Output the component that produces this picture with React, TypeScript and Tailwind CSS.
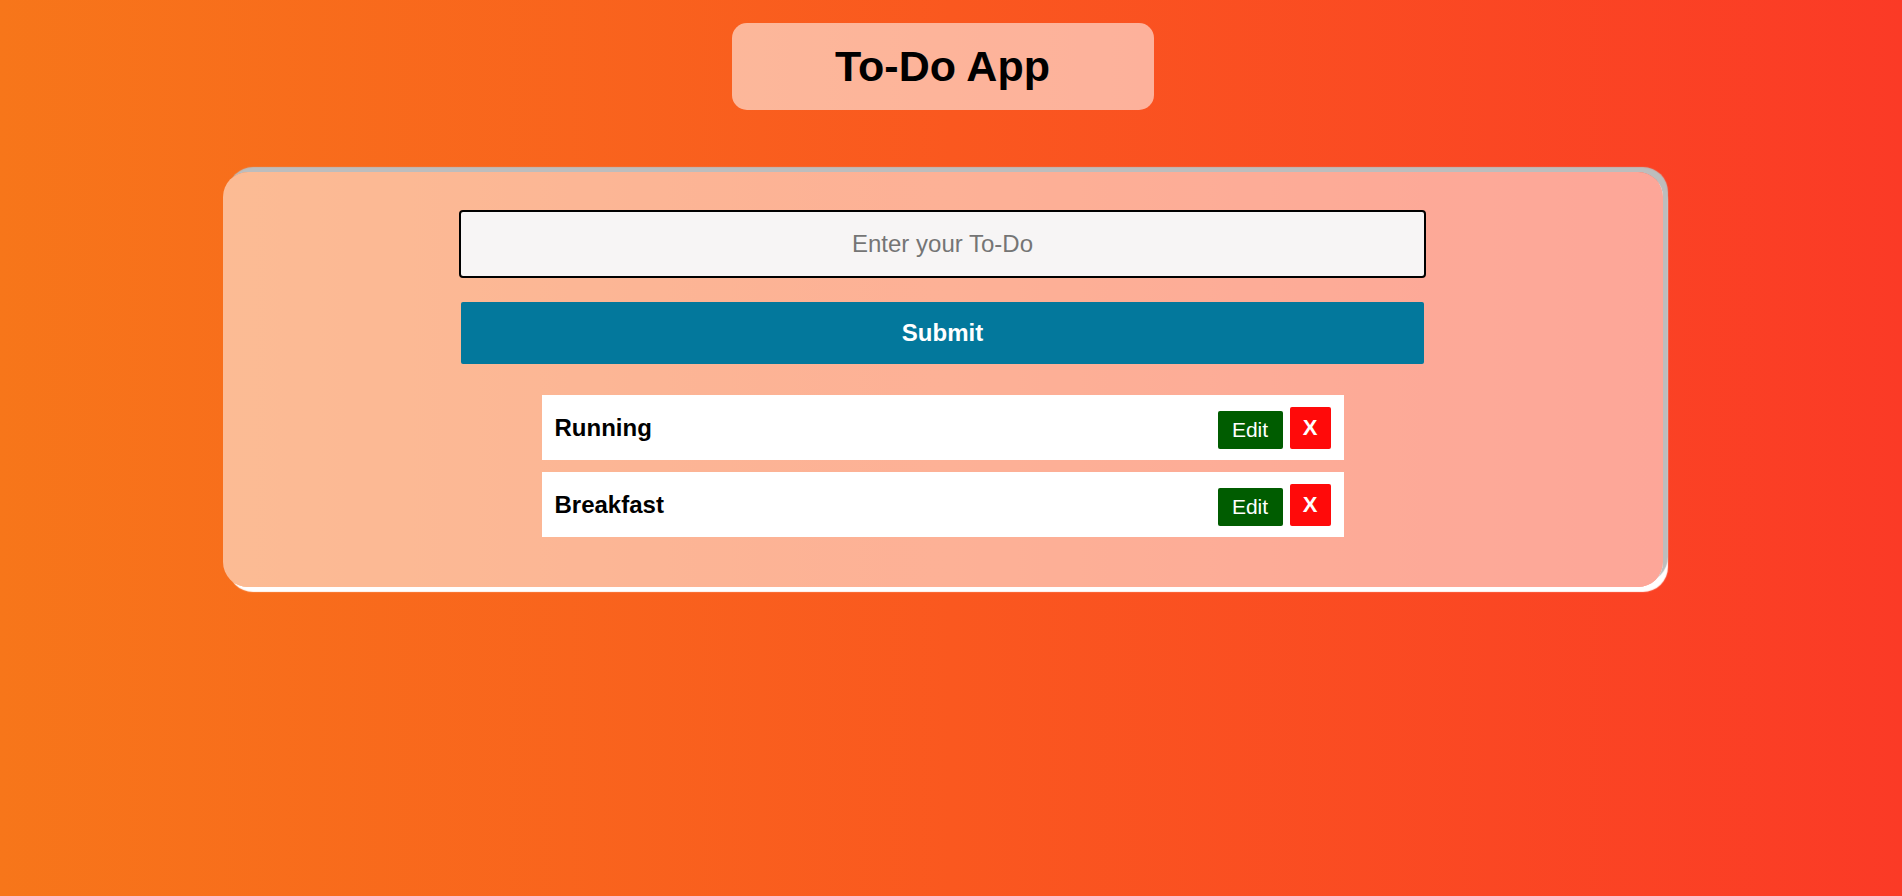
import { useState } from "react";

type Todo = { id: number; text: string };

const initial: Todo[] = [
  { id: 1, text: "Running" },
  { id: 2, text: "Breakfast" },
];

export default function App() {
  const [todos, setTodos] = useState<Todo[]>(initial);
  const [value, setValue] = useState("");

  const add = () => {
    if (!value.trim()) return;
    setTodos([...todos, { id: Date.now(), text: value.trim() }]);
    setValue("");
  };

  return (
    <main
      className="min-h-screen w-full bg-[linear-gradient(to_right,#f7761a,#fa581f,#fb3a26)] pr-[17px] pt-[23px] flex flex-col items-center"
      style={{ fontFamily: '"Liberation Sans", Arial, sans-serif' }}
    >
      <div className="w-[422px] h-[87px] rounded-[15px] bg-white/55 flex items-center justify-center">
        <h1 className="text-[43px] font-bold text-black leading-none">To-Do App</h1>
      </div>

      <section className="mt-[62px] w-[1440px] rounded-[25px] bg-white/[0.53] shadow-[5px_-5px_1px_#bdbdbd,5px_5px_1px_#ffffff] pt-[38px] pb-[50px] flex flex-col items-center">
        <input
          value={value}
          onChange={(e) => setValue(e.target.value)}
          placeholder="Enter your To-Do"
          className="w-[967px] h-[68px] rounded-[4px] border-2 border-black bg-[#f7f5f5] text-center text-[24px] text-black placeholder:text-[#757575] outline-none"
        />
        <button
          onClick={add}
          className="mt-[24px] w-[963px] h-[62px] rounded-[2px] bg-[#03789c] text-white text-[24px] font-bold"
        >
          Submit
        </button>

        <ul className="mt-[31px] w-[802px] flex flex-col gap-[12px]">
          {todos.map((t) => (
            <li
              key={t.id}
              className="h-[65px] bg-white flex items-center justify-between pl-[13px] pr-[13px]"
            >
              <span className="text-[24px] font-bold text-black">{t.text}</span>
              <div className="flex items-center gap-[7px]">
                <button className="mt-[4px] w-[65px] h-[38px] rounded-[2px] bg-[#005c00] text-white text-[21px]">
                  Edit
                </button>
                <button
                  onClick={() => setTodos(todos.filter((x) => x.id !== t.id))}
                  className="w-[41px] h-[42px] rounded-[2px] bg-[#ff0a0a] text-white text-[22px] font-bold"
                >
                  X
                </button>
              </div>
            </li>
          ))}
        </ul>
      </section>
    </main>
  );
}
